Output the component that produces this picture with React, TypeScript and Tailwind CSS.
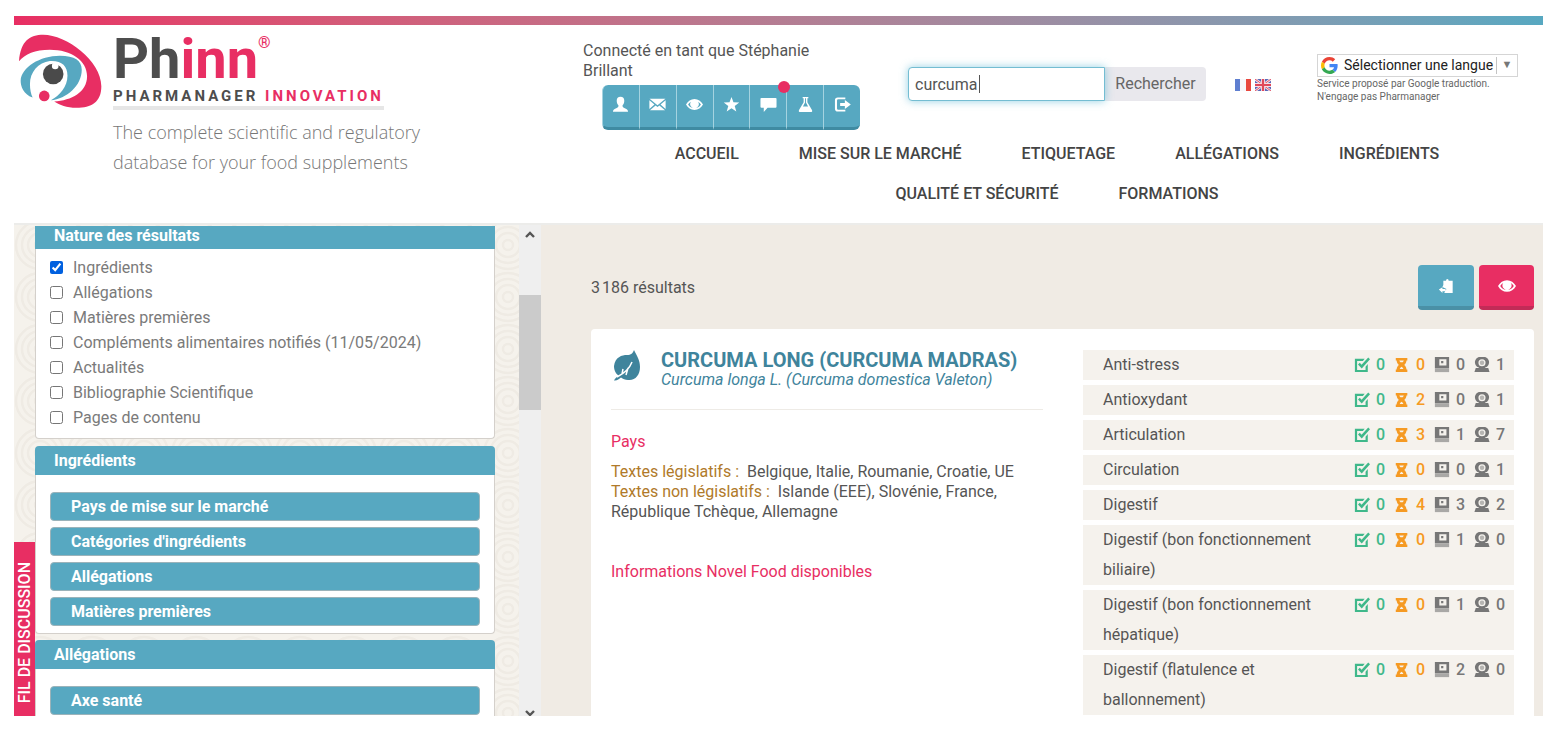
import type { ReactNode } from "react";

const TEAL = "#57a8c1";

function Logo() {
  return (
    <svg viewBox="54 102 256 228" className="h-[76px] w-[85px] shrink-0" aria-hidden="true">
      <path fill="#e82e63" d="M57 187C62 125 90 107 130 107C200 107 305 185 305 262C305 310 275 327 230 327C200 327 180 318 163 308C215 305 262 280 262 232C262 185 215 152 150 152C105 152 75 165 57 187Z" />
      <path fill={TEAL} d="M98 296C70 285 62 262 62 245C64 205 120 170 180 170C225 170 246 185 246 212C246 260 200 300 153 304C180 290 203 262 203 230C203 200 185 184 150 186C115 190 90 220 90 255C90 272 93 285 98 296Z" />
      <circle cx="160" cy="225" r="31" fill="#4a4a4a" />
      <circle cx="166" cy="201" r="10" fill="#fff" />
      <circle cx="133" cy="291" r="16" fill="#e82e63" />
    </svg>
  );
}

function Glyph({ children, className = "size-[18px]" }: { children: ReactNode; className?: string }) {
  return (
    <svg viewBox="0 0 18 18" fill="currentColor" className={className} aria-hidden="true">
      {children}
    </svg>
  );
}

const eye = (
  <>
    <path fillRule="evenodd" d="M0 9C2 5.400 5.200 3.200 9 3.200S16 5.400 18 9C16 12.600 12.800 14.800 9 14.800S2 12.600 0 9ZM2.200 9C3.800 11.600 6.200 13 9 13S14.200 11.600 15.800 9C15 7.600 14 6.600 12.800 6A4.500 4.500 0 1 1 5.200 6C4 6.600 3 7.600 2.200 9Z" />
    <path d="M9 4.500A3.600 3.600 0 1 0 12.600 8.500L9.500 8.500Z" />
  </>
);

const tools: { label: string; icon: ReactNode; dot?: boolean }[] = [
  { label: "Mon compte", icon: <path d="M9 .8C11.600 .8 13 2.500 13 5C13 7.200 12.200 8.800 11.200 9.800C11 11.600 11.600 12 13 12.600C15.500 13.500 17 14.200 17 16.800H1C1 14.200 2.500 13.500 5 12.600C6.400 12 7 11.600 6.800 9.800C5.800 8.800 5 7.200 5 5C5 2.500 6.400 .8 9 .8Z" /> },
  { label: "Messages", icon: <path d="M.6 3H17.400L9 9.800ZM.4 4.600L5.800 9L.4 13.800ZM17.600 4.600L12.200 9L17.600 13.800ZM1 15L7 10L9 11.600L11 10L17 15Z" /> },
  { label: "Veille", icon: eye },
  { label: "Favoris", icon: <path d="M9 1L11.100 6.700L17.200 6.900L12.400 10.600L14.100 16.500L9 13.100L3.900 16.500L5.600 10.600L.8 6.900L6.900 6.700Z" /> },
  { label: "Discussion", icon: <path d="M1.500 2H16.500Q17.500 2 17.500 3V11.500Q17.500 12.500 16.500 12.500H8L4 17V12.500H1.500Q.5 12.500 .5 11.500V3Q.5 2 1.500 2Z" />, dot: true },
  { label: "Laboratoire", icon: <path fillRule="evenodd" d="M6 1H12V2.500H11V6.500L16 15Q16.500 17 15 17H3Q1.500 17 2 15L7 6.500V2.500H6ZM8.500 2.500V7L6.300 11H11.700L9.500 7V2.500Z" /> },
  { label: "Déconnexion", icon: <path d="M12 3.200V1.500H4Q1 1.500 1 4.500V13.500Q1 16.500 4 16.500H12V14.500H4.500Q3.200 14.500 3.200 13.200V4.800Q3.200 3.500 4.500 3.500H12ZM6.500 7.300H11.500V4.300L17.800 9L11.500 13.700V10.700H6.500Z" /> },
];

const navItems = ["ACCUEIL", "MISE SUR LE MARCHÉ", "ETIQUETAGE", "ALLÉGATIONS", "INGRÉDIENTS", "QUALITÉ ET SÉCURITÉ", "FORMATIONS"];

const natures = [
  "Ingrédients",
  "Allégations",
  "Matières premières",
  "Compléments alimentaires notifiés (11/05/2024)",
  "Actualités",
  "Bibliographie Scientifique",
  "Pages de contenu",
];

const effects: [string, number, number, number, number][] = [
  ["Anti-stress", 0, 0, 0, 1],
  ["Antioxydant", 0, 2, 0, 1],
  ["Articulation", 0, 3, 1, 7],
  ["Circulation", 0, 0, 0, 1],
  ["Digestif", 0, 4, 3, 2],
  ["Digestif (bon fonctionnement biliaire)", 0, 0, 1, 0],
  ["Digestif (bon fonctionnement hépatique)", 0, 0, 1, 0],
  ["Digestif (flatulence et ballonnement)", 0, 0, 2, 0],
];

function FlagFr() {
  return (
    <svg viewBox="0 0 16 12" className="h-3 w-4" aria-hidden="true">
      <path fill="#5f7fd0" d="M0 0H5V12H0Z" />
      <path fill="#f7f7fb" d="M5 0H11V12H5Z" />
      <path fill="#e8483f" d="M11 0H16V12H11Z" />
    </svg>
  );
}

function FlagGb() {
  return (
    <svg viewBox="0 0 16 12" className="h-3 w-4" aria-hidden="true">
      <path fill="#5868b8" d="M0 0H16V12H0Z" />
      <path stroke="#f3dfe8" strokeWidth="2.600" d="M0 0L16 12M16 0L0 12" />
      <path stroke="#e0566a" strokeWidth="1" d="M0 0L16 12M16 0L0 12" />
      <path stroke="#f3dfe8" strokeWidth="4" d="M8 0V12M0 6H16" />
      <path stroke="#e0475a" strokeWidth="2.200" d="M8 0V12M0 6H16" />
    </svg>
  );
}

function GoogleG() {
  return (
    <svg viewBox="0 0 48 48" className="size-[17px] shrink-0" aria-hidden="true">
      <path fill="#EA4335" d="M24 9.500c3.500 0 6.700 1.200 9.200 3.600l6.900-6.900C35.900 2.400 30.500 0 24 0 14.600 0 6.500 5.400 2.600 13.200l8 6.200C12.400 13.700 17.700 9.500 24 9.500z" />
      <path fill="#4285F4" d="M47 24.500c0-1.600-.2-3.100-.4-4.500H24v9h12.900c-.6 3-2.300 5.500-4.800 7.200l7.700 6C44.400 38 47 31.800 47 24.500z" />
      <path fill="#FBBC05" d="M10.500 28.600c-.5-1.500-.8-3-.8-4.600s.3-3.100.8-4.600l-8-6.200C.9 16.500 0 20.100 0 24s.9 7.500 2.600 10.800l7.900-6.200z" />
      <path fill="#34A853" d="M24 48c6.500 0 11.900-2.100 15.900-5.800l-7.700-6c-2.200 1.500-4.900 2.300-8.200 2.300-6.300 0-11.600-4.200-13.500-9.900l-8 6.200C6.500 42.600 14.600 48 24 48z" />
    </svg>
  );
}

function Header() {
  return (
    <header className="flex h-[198px] shrink-0 bg-white">
      <a href="#accueil" className="flex w-[549px] shrink-0 pt-2 pl-1">
        <Logo />
        <div className="flex flex-col items-start pl-[10px]">
          <div className="flex h-[52px] items-start text-[56px] leading-[52px] font-bold text-[#4d4d4d]">
            Ph<span className="text-[#e82e63]">inn</span>
            <span className="text-[16px] leading-5 font-medium text-[#e82e63]">®</span>
          </div>
          <div className="mt-px border-b-4 border-[#e6e6e6] text-[15px] leading-5 font-bold tracking-[3px] text-[#4d4d4d]">
            PHARMANAGER <span className="text-[#e82e63]">INNOVATION</span>
          </div>
          <p className="pt-[7px] font-['Open_Sans',sans-serif] text-[18px] leading-[30px] font-light text-[#777]">
            The complete scientific and regulatory
            <br />
            database for your food supplements
          </p>
        </div>
      </a>
      <div className="flex min-w-0 grow flex-col">
        <div className="flex h-[109px] items-start pl-5">
          <div className="w-[276px] pt-4">
            <p className="text-[16px] leading-5 text-[#555]">
              Connecté en tant que Stéphanie
              <br />
              Brillant
            </p>
            <div className="mt-1 ml-[19px] flex w-[258px]">
              {tools.map((t) => (
                <button
                  key={t.label}
                  type="button"
                  aria-label={t.label}
                  className="relative flex h-[45px] flex-1 items-center justify-center border-b-3 border-l border-[#3f8ba2] border-l-[#a5d3e0] bg-[#57a8c1] pb-1 text-white first:rounded-l-md last:rounded-r-md"
                >
                  <Glyph className="size-[17px]">{t.icon}</Glyph>
                  {t.dot && <span className="absolute -top-1 -right-1 z-10 size-3 rounded-full bg-[#e82e63]" />}
                </button>
              ))}
            </div>
          </div>
          <form className="flex pt-[42px] pl-[49px]" onSubmit={(e) => e.preventDefault()}>
            <div className="relative">
              <input
                type="text"
                aria-label="Recherche"
                defaultValue="curcuma"
                className="h-[34px] w-[197px] rounded-l-sm border border-[#74bdd2] bg-white px-1.5 text-[16px] text-[#555] shadow-[0_0_8px_rgba(102,190,215,0.7)] outline-none"
              />
              <span className="absolute top-2 left-[71px] h-[18px] w-px bg-[#555]" />
            </div>
            <button type="submit" className="h-[34px] w-[101px] rounded-r-sm bg-[#e9e8ed] text-[16px] text-[#666]">
              Rechercher
            </button>
          </form>
          <div className="flex gap-1 pt-[54px] pl-[29px]">
            <a href="#fr" aria-label="Français"><FlagFr /></a>
            <a href="#en" aria-label="English"><FlagGb /></a>
          </div>
          <div className="pt-[29px] pl-[46px]">
            <div className="flex h-[23px] w-[201px] items-center border border-[#d5d5d5] bg-white pl-[3px]">
              <GoogleG />
              <select aria-label="Langue" className="min-w-0 grow appearance-none bg-transparent pl-1.5 text-[14px] text-[#222]">
                <option>Sélectionner une langue</option>
              </select>
              <span className="flex h-[17px] w-[21px] shrink-0 items-center justify-center border-l border-[#c4c4c4] text-[11px] text-[#777]">▼</span>
            </div>
            <p className="text-[10px] leading-[13px] text-[#666]">
              Service proposé par Google traduction.
              <br />
              N'engage pas Pharmanager
            </p>
          </div>
        </div>
        <nav className="flex flex-wrap justify-center gap-x-15 pr-2 pl-4">
          {navItems.map((n) => (
            <a key={n} href="#nav" className="text-[16px] leading-10 font-medium text-[#444]">
              {n}
            </a>
          ))}
        </nav>
      </div>
    </header>
  );
}

function SidePanel({ title, clipped, children }: { title: string; clipped?: boolean; children: ReactNode }) {
  return (
    <section className={clipped ? "mb-[7px]" : "mb-[6px]"}>
      <h2 className={clipped
        ? "flex h-[23px] items-center bg-[#57a8c1] pb-1 pl-[19px] text-[16px] font-bold text-white"
        : "flex h-[29px] items-center rounded-t-sm bg-[#57a8c1] pl-[19px] text-[16px] font-bold text-white"}>
        {title}
      </h2>
      <div className="rounded-b-sm border border-t-0 border-[#d4d0cb] bg-white">{children}</div>
    </section>
  );
}

function FilterList({ items }: { items: string[] }) {
  return (
    <div className="flex flex-col gap-[6px] px-[14px] pt-[17px] pb-[7px]">
      {items.map((i) => (
        <button key={i} type="button" className="h-[29px] shrink-0 rounded-sm border border-[#9bb3ba] bg-[#57a8c1] pl-5 text-left text-[16px] leading-5 font-bold text-white">
          {i}
        </button>
      ))}
    </div>
  );
}

function Sidebar() {
  return (
    <aside className="relative flex w-[527px] shrink-0 overflow-hidden bg-[#f5f2ec]">
      <svg className="absolute inset-0 size-full" aria-hidden="true">
        <defs>
          <pattern id="rings" width="52" height="52" x="468" y="-6" patternUnits="userSpaceOnUse">
            <g fill="none" stroke="#efebe4" strokeWidth="2.500">
              <circle cx="26" cy="26" r="5" />
              <circle cx="26" cy="26" r="12" />
              <circle cx="26" cy="26" r="18" />
              <circle cx="26" cy="26" r="24" />
            </g>
          </pattern>
        </defs>
        <rect width="100%" height="100%" fill="url(#rings)" />
      </svg>
      <button type="button" className="absolute bottom-0 left-0 z-10 flex h-[174px] w-[21px] items-center justify-center bg-[#e82e63] pt-2 text-[16px] font-medium text-white">
        <span className="rotate-180 whitespace-nowrap [writing-mode:vertical-rl]">FIL DE DISCUSSION</span>
      </button>
      <div className="relative ml-[21px] flex w-[460px] flex-col pt-px">
        <SidePanel title="Nature des résultats" clipped>
          <div className="px-[14px] pt-[6px] pb-2">
            {natures.map((n, i) => (
              <label key={n} className="flex h-[25px] items-center gap-[10px] text-[16px] text-[#7a7a7a]">
                <input type="checkbox" defaultChecked={i === 0} className="size-[13px] accent-[#0060df]" />
                {n}
              </label>
            ))}
          </div>
        </SidePanel>
        <SidePanel title="Ingrédients">
          <FilterList items={["Pays de mise sur le marché", "Catégories d'ingrédients", "Allégations", "Matières premières"]} />
        </SidePanel>
        <SidePanel title="Allégations">
          <FilterList items={["Axe santé"]} />
        </SidePanel>
      </div>
      <div className="relative ml-auto flex w-[22px] flex-col items-center bg-[#efefef] text-[#555]">
        <svg viewBox="0 0 12 12" className="mt-1 size-3" aria-hidden="true"><path d="M2 8L6 4L10 8" fill="none" stroke="currentColor" strokeWidth="2.400" /></svg>
        <div className="mt-[54px] h-[115px] w-full bg-[#cbcbcb]" />
        <svg viewBox="0 0 12 12" className="mt-auto -mb-1 size-3" aria-hidden="true"><path d="M2 3L6 7L10 3" fill="none" stroke="currentColor" strokeWidth="2.400" /></svg>
      </div>
    </aside>
  );
}

function Count({ value, className, icon }: { value: number; className: string; icon: ReactNode }) {
  return (
    <span className={`flex w-10 items-center gap-[6px] ${className}`}>
      <Glyph className="size-4">{icon}</Glyph>
      {value}
    </span>
  );
}

const checkIcon = <path fillRule="evenodd" d="M1 2H12L10 4.500H3.500V14.500H13V11L15.500 8V17H1ZM4.500 8.500L6.500 6.500L8.500 8.800L16 .5L18 2.500L8.700 13Z" />;
const hourIcon = <path fillRule="evenodd" d="M2 1H15V4H14C14 6 13 8 11.500 9C13 10 14 12 14 14H15V17H2V14H3C3 12 4 10 5.500 9C4 8 3 6 3 4H2ZM6 4C6.200 5 6.700 5.600 7.300 6H9.700C10.300 5.600 10.800 5 11 4ZM8.500 11C7.500 11.500 6.800 12.500 6.500 13.500H10.500C10.200 12.500 9.500 11.500 8.500 11Z" />;
const bookIcon = (
  <>
    <path fillRule="evenodd" d="M1 0H17V12.500H1ZM6 2.500V9.500H14V2.500ZM8 4.500H10.500V7H8Z" />
    <path d="M1 12.500H17V17H1Z" opacity="0.600" />
  </>
);
const expertIcon = (
  <>
    <path fillRule="evenodd" d="M9 0A6.200 6.200 0 0 1 12.500 11.900V13H5.500V11.900A6.200 6.200 0 0 1 9 0ZM9 2.500A4 4 0 0 0 9 10.500A4 4 0 0 0 9 2.500Z" />
    <circle cx="9" cy="6.500" r="2.500" opacity="0.500" />
    <path d="M2 12.500H16L17.500 17H.5Z" />
  </>
);

function Results() {
  return (
    <main className="flex min-w-0 grow flex-col overflow-hidden bg-[#f0ebe4] pr-[9px] pl-[50px]">
      <div className="flex items-center justify-between pt-10">
        <p className="text-[16px] text-[#555]">3&#8239;186 résultats</p>
        <div className="flex gap-[5px]">
          <button type="button" aria-label="Exporter" className="flex h-[45px] w-14 items-center justify-center rounded-sm border-b-4 border-[#4a90a6] bg-[#57a8c1] text-white">
            <Glyph className="size-4"><path d="M6 3H9Q9 1 10.500 1T12 3H16.500V17H7L9.500 12.500L5 10L6 8ZM1 13L5 10.500V12.500H8.500V15H5V17Z" /></Glyph>
          </button>
          <button type="button" aria-label="Suivre" className="flex h-[45px] w-[55px] items-center justify-center rounded-sm border-b-4 border-[#c22b57] bg-[#e82e63] text-white">
            <Glyph>{eye}</Glyph>
          </button>
        </div>
      </div>
      <article className="mt-[19px] flex grow rounded-t-sm bg-white px-5 pt-5">
        <div className="mr-10 min-w-0 grow pt-px">
          <header className="flex gap-[21px] border-b border-[#eeebe6] pl-[3px]">
            <svg viewBox="0 0 26 31" className="h-[31px] w-[26px] shrink-0 text-[#3f849c]" aria-hidden="true">
              <path fill="currentColor" d="M20 0C23 6 26 10 26 17C26 25 21 31 14 30C11 30 9 29 7 27.500C5 29 3 31 0 30.500C1 28 3 27.500 4.500 25.500C1 23 0 19 0 16C1 7 8 5 13 5C17 5 19 3 20 0Z" />
              <path fill="none" stroke="#fff" strokeWidth="1.500" d="M3 27C9 24 15 20 18 12M9 19L8 24M14 18L12 25" />
            </svg>
            <div className="h-[59px]">
              <h1 className="text-[20px] leading-5 font-bold text-[#3f849c]">CURCUMA LONG (CURCUMA MADRAS)</h1>
              <p className="text-[16px] leading-5 text-[#3f849c] italic">Curcuma longa L. (Curcuma domestica Valeton)</p>
            </div>
          </header>
          <h2 className="pt-[22px] text-[16px] leading-5 text-[#e82e63]">Pays</h2>
          <p className="pt-[10px] text-[16px] leading-5 text-[#555]">
            <span className="text-[#b07a2a]">Textes législatifs :</span>&nbsp; Belgique, Italie, Roumanie, Croatie, UE
          </p>
          <p className="text-[16px] leading-5 text-[#555]">
            <span className="text-[#b07a2a]">Textes non législatifs :</span>&nbsp; Islande (EEE), Slovénie, France, République Tchèque, Allemagne
          </p>
          <p className="pt-10 text-[16px] leading-5 text-[#e82e63]">Informations Novel Food disponibles</p>
        </div>
        <ul className="flex w-[431px] shrink-0 flex-col gap-[5px] pt-px">
          {effects.map(([name, a, b, c, d]) => (
            <li key={name} className="flex items-start justify-between bg-[#f5f2ed] pl-5 text-[16px] leading-[30px] text-[#555]">
              <span className="w-[215px]">{name}</span>
              <span className="flex font-medium">
                <Count value={a} className="text-[#3fb88a]" icon={checkIcon} />
                <Count value={b} className="text-[#f59a23]" icon={hourIcon} />
                <Count value={c} className="text-[#777]" icon={bookIcon} />
                <Count value={d} className="text-[#777]" icon={expertIcon} />
              </span>
            </li>
          ))}
        </ul>
      </article>
    </main>
  );
}

export default function App() {
  return (
    <div className="flex h-screen flex-col overflow-hidden bg-white pt-4 pr-[23px] pb-9 pl-[14px] font-[Roboto,sans-serif]">
      <div className="h-[9px] shrink-0 bg-linear-to-r from-[#e82e63] to-[#57a8c1]" />
      <Header />
      <div className="flex min-h-0 grow border-t-2 border-[#ececea]">
        <Sidebar />
        <Results />
      </div>
    </div>
  );
}
